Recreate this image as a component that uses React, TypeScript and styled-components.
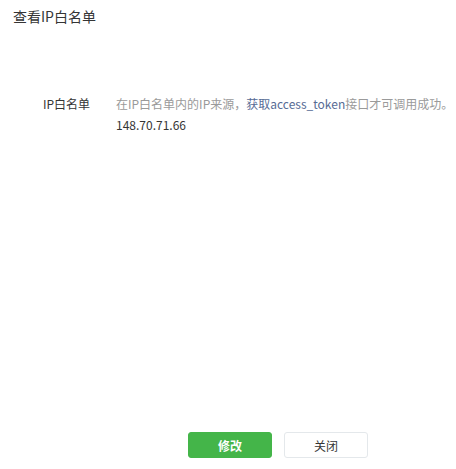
import styled, { createGlobalStyle } from 'styled-components';

const GlobalStyle = createGlobalStyle`
  html, body {
    margin: 0;
    padding: 0;
    background: #fff;
    font-family: 'Microsoft YaHei', 'Noto Sans CJK SC', 'Noto Sans', sans-serif;
  }
`;

const App = () => {
  return (
    <>
      <GlobalStyle />
      <Dialog>
        <Title>查看IP白名单</Title>
        <Body>
          <FormRow>
            <Label>IP白名单</Label>
            <Content>
              <Tips>
                在IP白名单内的IP来源，<Link href="#">获取access_token</Link>接口才可调用成功。
              </Tips>
              <IpList>
                <li>148.70.71.66</li>
              </IpList>
            </Content>
          </FormRow>
        </Body>
        <Footer>
          <Button primary>修改</Button>
          <Button>关闭</Button>
        </Footer>
      </Dialog>
    </>
  );
};

export default App;

const Dialog = styled.div`
  display: flex;
  flex-direction: column;
  width: 456px;
  height: 469px;
  box-sizing: border-box;
`;

const Title = styled.h3`
  margin: 0;
  padding: 6px 13px 0;
  font-size: 14px;
  font-weight: 400;
  line-height: 20px;
  color: #353535;
`;

const Body = styled.div`
  flex: 1;
  padding-top: 67px;
`;

const FormRow = styled.div`
  display: flex;
  align-items: flex-start;
`;

const Label = styled.label`
  width: 90px;
  flex-shrink: 0;
  text-align: right;
  font-size: 12px;
  line-height: 21px;
  color: #353535;
`;

const Content = styled.div`
  margin-left: 26px;
  font-size: 12px;
  line-height: 21px;
`;

const Tips = styled.p`
  margin: 0;
  color: #9a9a9a;
  white-space: nowrap;
`;

const Link = styled.a`
  color: #576b95;
  text-decoration: none;
`;

const IpList = styled.ul`
  margin: 0;
  padding: 0;
  list-style: none;
  color: #353535;
`;

const Footer = styled.div`
  display: flex;
  justify-content: center;
  gap: 12px;
  padding: 0 0 11px 100px;
`;

const Button = styled.button<{ primary?: boolean }>`
  width: 84px;
  height: 26px;
  box-sizing: border-box;
  border-radius: 3px;
  border: 1px solid ${(p) => (p.primary ? '#44b549' : '#e4e8eb')};
  background: ${(p) => (p.primary ? '#44b549' : '#fff')};
  color: ${(p) => (p.primary ? '#fff' : '#353535')};
  font-family: inherit;
  font-size: 12px;
  font-weight: ${(p) => (p.primary ? 700 : 400)};
  cursor: pointer;
  padding: 0;
`;
